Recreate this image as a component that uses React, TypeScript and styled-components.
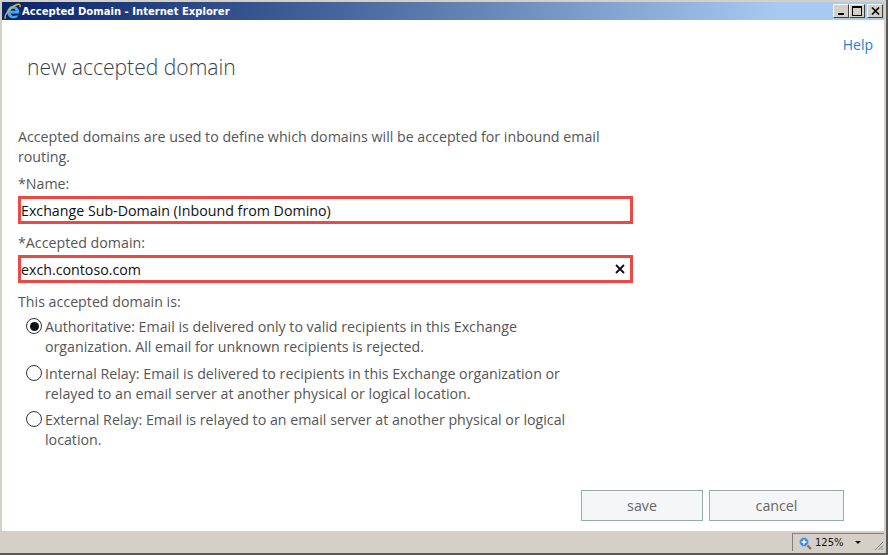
import React from "react";
import styled, { createGlobalStyle } from "styled-components";

const Global = createGlobalStyle`
  html, body { margin: 0; padding: 0; background: #d4d0c8; }
  #root { width: 888px; height: 555px; overflow: hidden; }
  * { box-sizing: border-box; }
`;

const Frame = styled.div`
  width: 888px;
  height: 555px;
  display: flex;
  flex-direction: column;
  background: #d4d0c8;
  padding: 2px 2px 1px 2px;
  border-right: 2px solid #5a5852;
  border-bottom: 2px solid #5a5852;
  font-family: "Open Sans", "Noto Sans", sans-serif;
`;

const TitleBar = styled.div`
  height: 18px;
  flex: none;
  display: flex;
  align-items: center;
  padding: 0 1px 0 2px;
  background: linear-gradient(90deg, #0a246a 0%, #3f6098 35%, #a6caf0 88%);
`;

const TitleIcon = styled.svg`
  width: 17px;
  height: 17px;
  flex: none;
`;

const TitleText = styled.span`
  font-family: "DejaVu Sans", sans-serif;
  font-size: 10.05px;
  font-weight: 700;
  color: #fff;
  margin-left: 1px;
  flex: 1;
`;

const WinBtn = styled.div<{ $gap?: boolean }>`
  width: 16px;
  height: 14px;
  margin-left: ${(p) => (p.$gap ? "2px" : "0")};
  background: #d4d0c8;
  border: 1px solid;
  border-color: #fff #404040 #404040 #fff;
  display: flex;
  align-items: center;
  justify-content: center;
`;

const Body = styled.div`
  flex: 1;
  background: #fff;
  display: flex;
  flex-direction: column;
  padding: 0 10px 10px 16px;
  min-height: 0;
`;

const HelpRow = styled.div`
  display: flex;
  justify-content: flex-end;
  padding: 15px 1px 0 0;
  height: 37px;
`;

const HelpLink = styled.a`
  font-size: 14px;
  line-height: 20px;
  color: #1a82d9;
`;

const Heading = styled.h1`
  margin: 0 0 50px 9px;
  font-weight: 300;
  font-size: 21.1px;
  line-height: 20px;
  color: #3a3f4a;
`;

const Intro = styled.p`
  margin: 0;
  font-size: 14.23px;
  line-height: 20px;
  color: #555;
  width: 600px;
`;

const Label = styled.div<{ $top: number }>`
  margin-top: ${(p) => p.$top}px;
  font-size: 14.23px;
  line-height: 20px;
  color: #555;
`;

const Field = styled.div`
  width: 615px;
  height: 28px;
  margin-top: 2px;
  border: 3px solid #ea4a47;
  background: #fff;
  display: flex;
  align-items: center;
  justify-content: space-between;
  padding: 0 5px 0 0;
  font-size: 14.23px;
  color: #111;
`;

const ClearIcon = styled.svg`
  width: 10px;
  height: 10px;
  flex: none;
`;

const Options = styled.div`
  display: flex;
  flex-direction: column;
  gap: 6.5px;
  margin-top: 5px;
  padding-left: 8px;
`;

const Option = styled.div`
  display: flex;
  gap: 3px;
  width: 558px;
`;

const Radio = styled.span<{ $on?: boolean }>`
  width: 16px;
  height: 16px;
  flex: none;
  margin-top: 1px;
  border: 1.5px solid #333;
  border-radius: 50%;
  background: #fff;
  display: flex;
  align-items: center;
  justify-content: center;
  &::after {
    content: "";
    display: ${(p) => (p.$on ? "block" : "none")};
    width: 9px;
    height: 9px;
    border-radius: 50%;
    background: #111;
  }
`;

const OptionText = styled.span`
  font-size: 14.23px;
  line-height: 20px;
  color: #555;
`;

const Actions = styled.div`
  margin-top: auto;
  display: flex;
  justify-content: flex-end;
  gap: 6px;
  padding-right: 30px;
`;

const Button = styled.button<{ $w: number }>`
  width: ${(p) => p.$w}px;
  height: 31px;
  background: #f5f6f7;
  border: 1px solid #9aa9a9;
  font-family: inherit;
  font-size: 14.23px;
  color: #666;
  padding: 0;
`;

const StatusBar = styled.div`
  height: 21px;
  flex: none;
  display: flex;
  justify-content: flex-end;
  align-items: flex-end;
  padding: 0 0 1px 0;
`;

const Zoom = styled.div`
  width: 92px;
  height: 18px;
  display: flex;
  align-items: center;
  border-left: 1px solid #808080;
  border-top: 1px solid #808080;
  padding-left: 5px;
  font-family: "DejaVu Sans", sans-serif;
  font-size: 10px;
  color: #111;
`;

const ZoomIcon = styled.svg`
  width: 14px;
  height: 14px;
  flex: none;
`;

const ZoomText = styled.span`
  margin-left: 3px;
  width: 40px;
`;

const Caret = styled.span`
  width: 0;
  height: 0;
  border-left: 3px solid transparent;
  border-right: 3px solid transparent;
  border-top: 3px solid #111;
`;

const Grip = styled.svg`
  width: 14px;
  height: 14px;
  margin-left: auto;
  align-self: flex-end;
`;

export default function App() {
  return (
    <>
      <Global />
      <Frame>
        <TitleBar>
          <TitleIcon viewBox="0 0 17 17">
            <path d="M9.300 2.800a6.200 6.200 0 0 0-6 7.600 6.200 6.200 0 0 0 11.300 2h-3.400a3 3 0 0 1-4.600-2h8.500A6.200 6.200 0 0 0 9.300 2.800zM6.600 7.700a2.800 2.800 0 0 1 5.300 0z" fill="#4aa6ea" />
            <path d="M1.500 15.800C-.5 12.500 6 4 13 1.500c2.400-.9 3.800.3 2.800 2.600" fill="none" stroke="#e8b030" strokeWidth="1.4" />
          </TitleIcon>
          <TitleText>Accepted Domain - Internet Explorer</TitleText>
          <WinBtn>
            <svg width="8" height="8" viewBox="0 0 8 8"><rect x="1" y="6" width="6" height="2" fill="#000" /></svg>
          </WinBtn>
          <WinBtn>
            <svg width="10" height="10" viewBox="0 0 10 10"><rect x="0.5" y="0.5" width="9" height="9" fill="none" stroke="#000" /><rect x="0" y="0" width="10" height="2" fill="#000" /></svg>
          </WinBtn>
          <WinBtn $gap>
            <svg width="9" height="8" viewBox="0 0 9 8"><path d="M1 0.500L8 7.500M8 0.500L1 7.500" stroke="#000" strokeWidth="1.6" /></svg>
          </WinBtn>
        </TitleBar>
        <Body>
          <HelpRow>
            <HelpLink>Help</HelpLink>
          </HelpRow>
          <Heading>new accepted domain</Heading>
          <Intro>Accepted domains are used to define which domains will be accepted for inbound email routing.</Intro>
          <Label $top={7}>*Name:</Label>
          <Field>Exchange Sub-Domain (Inbound from Domino)</Field>
          <Label $top={9}>*Accepted domain:</Label>
          <Field>
            exch.contoso.com
            <ClearIcon viewBox="0 0 10 10"><path d="M1 1L9 9M9 1L1 9" stroke="#0a0a20" strokeWidth="1.8" /></ClearIcon>
          </Field>
          <Label $top={9}>This accepted domain is:</Label>
          <Options>
            <Option>
              <Radio $on />
              <OptionText>Authoritative: Email is delivered only to valid recipients in this Exchange organization. All email for unknown recipients is rejected.</OptionText>
            </Option>
            <Option>
              <Radio />
              <OptionText>Internal Relay: Email is delivered to recipients in this Exchange organization or relayed to an email server at another physical or logical location.</OptionText>
            </Option>
            <Option>
              <Radio />
              <OptionText>External Relay: Email is relayed to an email server at another physical or logical location.</OptionText>
            </Option>
          </Options>
          <Actions>
            <Button $w={122}>save</Button>
            <Button $w={135}>cancel</Button>
          </Actions>
        </Body>
        <StatusBar>
          <Zoom>
            <ZoomIcon viewBox="0 0 14 14">
              <circle cx="6" cy="6" r="4.500" fill="#3f86d8" stroke="#9cc4ee" />
              <path d="M6 3.500v5M3.500 6h5" stroke="#fff" strokeWidth="1.400" />
              <path d="M9.500 9.500L13 13" stroke="#8a6a3a" strokeWidth="2" />
            </ZoomIcon>
            <ZoomText>125%</ZoomText>
            <Caret />
            <Grip viewBox="0 0 14 14">
              <path d="M13 5L5 13M13 8.500L8.500 13M13 11.500L11.500 13" stroke="#808080" strokeWidth="1" />
            </Grip>
          </Zoom>
        </StatusBar>
      </Frame>
    </>
  );
}
